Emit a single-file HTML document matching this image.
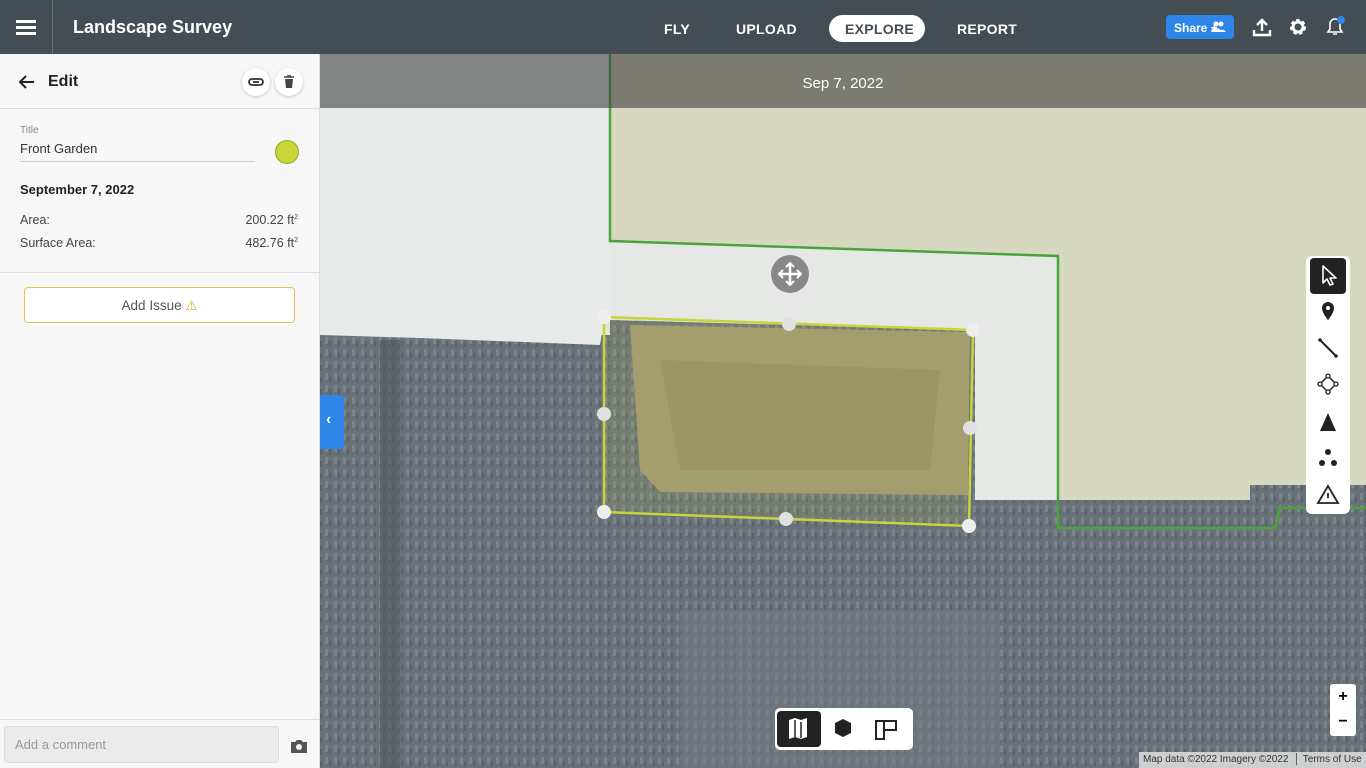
<!DOCTYPE html>
<html><head><meta charset="utf-8"><style>
*{box-sizing:border-box;margin:0;padding:0}
body{width:1366px;height:768px;overflow:hidden;font-family:"Liberation Sans",sans-serif;position:relative;background:#fff}
.top{position:absolute;left:0;top:0;width:1366px;height:54px;background:#454d54;color:#fff}
.nav{position:absolute;top:21px;font-weight:bold;font-size:14px;letter-spacing:.3px}
.side{position:absolute;left:0;top:54px;width:320px;height:714px;background:#f7f7f7;border-right:1px solid #ddd}
.map{position:absolute;left:320px;top:54px;width:1046px;height:714px;overflow:hidden}
.circ{position:absolute;width:28px;height:28px;border-radius:50%;background:#fff;box-shadow:0 1px 3px rgba(0,0,0,.2)}
</style></head><body>
<div class="top">
 <div style="position:absolute;left:16px;top:20px;width:20px;height:3px;background:#fff;box-shadow:0 6px 0 #fff,0 12px 0 #fff"></div>
 <div style="position:absolute;left:52px;top:0;width:1px;height:54px;background:#6a7177"></div>
 <div style="position:absolute;left:73px;top:17px;font-size:18px;font-weight:bold">Landscape Survey</div>
 <div class="nav" style="left:664px">FLY</div>
 <div class="nav" style="left:736px">UPLOAD</div>
 <div style="position:absolute;left:829px;top:15px;width:96px;height:27px;border-radius:14px;background:#fff"></div>
 <div class="nav" style="left:845px;color:#454d54">EXPLORE</div>
 <div class="nav" style="left:957px">REPORT</div>
 <div style="position:absolute;left:1166px;top:15px;width:68px;height:24px;background:#2d86e8;border-radius:4px;font-size:12px;font-weight:bold;padding:6px 0 0 8px">Share +</div>
 <svg style="position:absolute;left:1210px;top:21px" width="16" height="12" viewBox="0 0 16 12"><circle cx="6" cy="3" r="2.5" fill="#fff"/><circle cx="11" cy="3" r="2.5" fill="#fff"/><path d="M1 11a5 4 0 0 1 10 0zM7 11a5 4 0 0 1 9 0z" fill="#fff"/></svg>
 <svg style="position:absolute;left:1252px;top:17px" width="20" height="20" viewBox="0 0 20 20"><path d="M10 14V3M5 8l5-5 5 5M2 13v5h16v-5" stroke="#fff" stroke-width="2.4" fill="none"/></svg>
 <svg style="position:absolute;left:1288px;top:17px" width="20" height="20" viewBox="0 0 20 20"><circle cx="10" cy="10" r="6" fill="none" stroke="#fff" stroke-width="4" stroke-dasharray="3 2.3"/><circle cx="10" cy="10" r="5" fill="none" stroke="#fff" stroke-width="3"/></svg>
 <svg style="position:absolute;left:1324px;top:15px" width="22" height="22" viewBox="0 0 22 22"><path d="M4 17h14l-2-3v-5a5 5 0 0 0-10 0v5zM9 19h4" stroke="#fff" stroke-width="1.6" fill="none"/><circle cx="17" cy="5" r="4" fill="#2d86e8"/></svg>
</div>
<div class="side">
 <svg style="position:absolute;left:18px;top:20px" width="18" height="16" viewBox="0 0 18 16"><path d="M16 8H3M8 2L2 8l6 6" stroke="#222" stroke-width="2" fill="none"/></svg>
 <div style="position:absolute;left:48px;top:19px;font-size:16px;font-weight:bold;color:#222">Edit</div>
 <div class="circ" style="left:242px;top:14px"><svg width="28" height="28" viewBox="0 0 28 28"><rect x="7" y="11" width="14" height="6" rx="3" fill="none" stroke="#333" stroke-width="1.8"/><path d="M11 14h6" stroke="#333" stroke-width="1.8"/></svg></div>
 <div class="circ" style="left:275px;top:14px"><svg width="28" height="28" viewBox="0 0 28 28"><path d="M10 11h8l-1 9h-6z" fill="#444"/><path d="M9 9h10M12 8h4" stroke="#444" stroke-width="1.6"/></svg></div>
 <div style="position:absolute;left:0;top:54px;width:320px;height:1px;background:#ddd"></div>
 <div style="position:absolute;left:20px;top:71px;font-size:10px;color:#888">Title</div>
 <div style="position:absolute;left:20px;top:87px;font-size:13px;color:#333">Front Garden</div>
 <div style="position:absolute;left:20px;top:107px;width:235px;height:1px;background:#ccc"></div>
 <div style="position:absolute;left:275px;top:86px;width:24px;height:24px;border-radius:50%;background:#c9d63a;border:1px solid #9aa52a"></div>
 <div style="position:absolute;left:20px;top:128px;font-size:13px;font-weight:bold;color:#222">September 7, 2022</div>
 <div style="position:absolute;left:20px;top:159px;font-size:12.5px;color:#444">Area:</div>
 <div style="position:absolute;right:21px;top:159px;font-size:12.5px;color:#444">200.22 ft<sup style="font-size:7px">2</sup></div>
 <div style="position:absolute;left:20px;top:182px;font-size:12.5px;color:#444">Surface Area:</div>
 <div style="position:absolute;right:21px;top:182px;font-size:12.5px;color:#444">482.76 ft<sup style="font-size:7px">2</sup></div>
 <div style="position:absolute;left:0;top:218px;width:320px;height:1px;background:#ddd"></div>
 <div style="position:absolute;left:24px;top:233px;width:271px;height:36px;border:1px solid #e0c060;border-radius:4px;background:#fff;text-align:center;font-size:13.5px;color:#555;padding-top:10px">Add Issue <span style="color:#d8b030">⚠</span></div>
 <div style="position:absolute;left:0;top:665px;width:320px;height:1px;background:#ddd"></div>
 <div style="position:absolute;left:4px;top:672px;width:275px;height:37px;background:#ebebeb;border:1px solid #ddd;border-radius:3px;font-size:13px;color:#999;padding:10px 10px">Add a comment</div>
 <svg style="position:absolute;left:290px;top:684px" width="18" height="16" viewBox="0 0 18 16"><path d="M1 4h4l2-2h4l2 2h4v11H1z" fill="#555"/><circle cx="9" cy="9" r="3" fill="#f7f7f7"/></svg>
</div>
<div class="map">
<svg width="1046" height="714" viewBox="320 54 1046 714">
 <defs><pattern id="sh" width="9" height="12" patternUnits="userSpaceOnUse"><rect width="9" height="12" fill="#6a7279"/><rect x="1" y="1" width="3" height="7" fill="#7c848b"/><rect x="5" y="5" width="2" height="6" fill="#5c636a"/></pattern></defs>
 <rect x="320" y="54" width="1046" height="714" fill="url(#sh)"/>
 <rect x="380" y="340" width="20" height="428" fill="#50575e" opacity=".6"/>
 <rect x="680" y="610" width="320" height="158" fill="#747c83" opacity=".5"/>
 <path d="M610 54V240L1058 256V500H1250V485H1366V54Z" fill="#d6d8bf"/>
 <path d="M320 54H610V335H320Z" fill="#e8eaea"/>
 <path d="M320 335L420 338L600 345L604 320V240H320Z" fill="#e8eaea"/>
 <path d="M610 240L1058 256V500H975V330L610 320Z" fill="#e6e8e6"/>
 <path d="M630 325L970 332L968 495L660 492L640 470Z" fill="#a09876"/>
 <path d="M660 360L940 370L930 470L680 470Z" fill="#8f8a62" opacity=".6"/>
 <path d="M604 317L973 330L969 526L604 512Z" fill="#c8d040" fill-opacity=".12" stroke="#c8d43c" stroke-width="2.5"/>
 <path d="M610 54V241L1058 256V528H1275L1280 508H1366" fill="none" stroke="#4aa33c" stroke-width="2.5"/>
 <g fill="#eee"><circle cx="604" cy="317" r="7"/><circle cx="973" cy="330" r="7"/><circle cx="969" cy="526" r="7"/><circle cx="604" cy="512" r="7"/></g>
 <g fill="#e0e0e0"><circle cx="789" cy="324" r="7"/><circle cx="970" cy="428" r="7"/><circle cx="786" cy="519" r="7"/><circle cx="604" cy="414" r="7"/></g>
 <circle cx="790" cy="274" r="19" fill="#888"/>
 <path d="M790 264v20M780 274h20" stroke="#fff" stroke-width="2.5"/>
 <path d="M786 267l4-4 4 4M786 281l4 4 4-4M783 270l-4 4 4 4M797 270l4 4-4 4" stroke="#fff" stroke-width="2" fill="none"/>
 <rect x="320" y="54" width="1046" height="54" fill="#3d3d3d" fill-opacity=".6"/>
 <text x="843" y="88" fill="#fff" font-size="15" text-anchor="middle" font-family="Liberation Sans">Sep 7, 2022</text>
</svg>
 <div style="position:absolute;left:0;top:341px;width:24px;height:54px;background:#2d86e8;border-radius:0 4px 4px 0;color:#fff;font-size:16px;font-weight:bold;padding:16px 0 0 6px">‹</div>
 <div style="position:absolute;left:986px;top:202px;width:44px;height:258px;background:#fff;border-radius:6px"></div>
 <div style="position:absolute;left:990px;top:204px;width:36px;height:36px;background:#222;border-radius:4px"></div>
 <svg style="position:absolute;left:986px;top:202px" width="44" height="258" viewBox="0 0 44 258">
  <path d="M17 10v17l4-4 3 6 3-1-3-6h6z" fill="#222" stroke="#fff" stroke-width="1.6" stroke-linejoin="round"/>
  <path d="M22 46a6 6 0 0 0-6 6c0 5 6 12 6 12s6-7 6-12a6 6 0 0 0-6-6z" fill="#222"/><circle cx="22" cy="52" r="2" fill="#fff"/>
  <path d="M14 84l16 16" stroke="#222" stroke-width="2"/><circle cx="14" cy="84" r="1.8" fill="#222"/><circle cx="30" cy="100" r="1.8" fill="#222"/>
  <path d="M22 120l8 8-8 8-8-8z" fill="none" stroke="#222" stroke-width="1.5"/>
  <g fill="#fff" stroke="#222" stroke-width="1.3"><circle cx="22" cy="120" r="2"/><circle cx="30" cy="128" r="2"/><circle cx="22" cy="136" r="2"/><circle cx="14" cy="128" r="2"/></g>
  <path d="M22 157l-8 18h8zM22 157l8 18h-8z" fill="#222"/>
  <g fill="#222"><circle cx="22" cy="196" r="3"/><circle cx="16" cy="207" r="3"/><circle cx="28" cy="207" r="3"/></g>
  <path d="M22 230l-10 17h20z" fill="none" stroke="#222" stroke-width="1.8"/><path d="M22 237v5" stroke="#222" stroke-width="1.8"/>
 </svg>
 <div style="position:absolute;left:455px;top:654px;width:138px;height:42px;background:#fff;border-radius:5px"></div>
 <div style="position:absolute;left:457px;top:657px;width:44px;height:36px;background:#222;border-radius:4px"></div>
 <svg style="position:absolute;left:455px;top:654px" width="138" height="42" viewBox="0 0 138 42">
  <path d="M14 12l6-2 6 2 6-2v19l-6 2-6-2-6 2z" fill="#fff"/><path d="M20 12v17M26 14v16" stroke="#222" stroke-width="1.5"/>
  <path d="M68 11l8 4v10l-8 4-8-4v-10z" fill="#222"/>
  <path d="M101 13h20v9h-12v9h-8zM109 13v18" fill="none" stroke="#222" stroke-width="2"/>
 </svg>
 <div style="position:absolute;left:1010px;top:630px;width:26px;height:52px;background:#fff;border-radius:3px;text-align:center;font-size:16px;font-weight:bold;line-height:25px">+<br>−</div>
 <div style="position:absolute;left:819px;top:698px;width:227px;height:16px;background:rgba(230,230,230,.8);font-size:10px;color:#333;padding:2px 4px">Map data ©2022 Imagery ©2022 &nbsp;│ Terms of Use</div>
</div>
</body></html>
